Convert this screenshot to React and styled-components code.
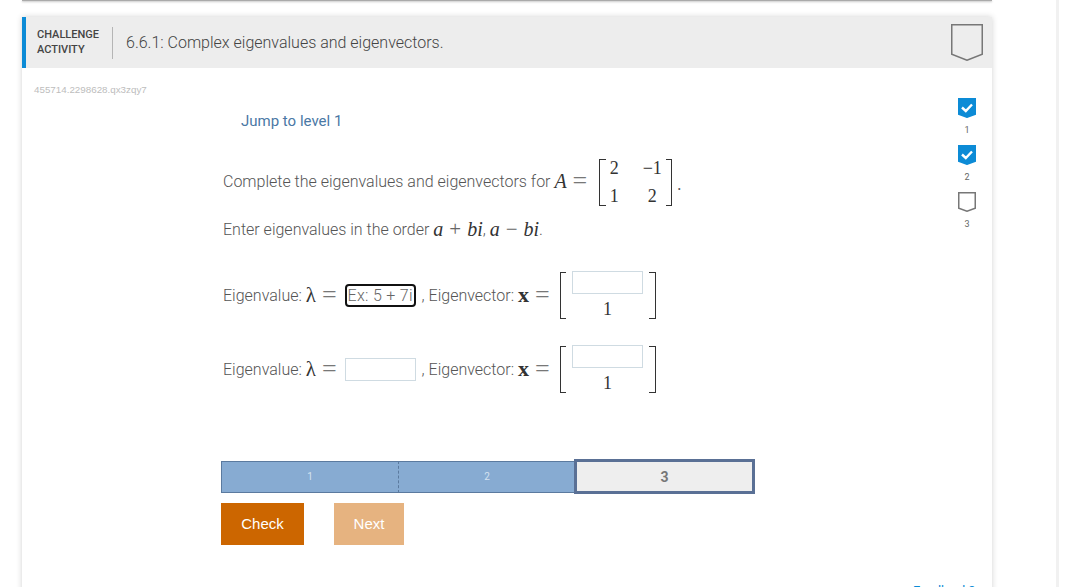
import styled, { createGlobalStyle } from 'styled-components'

const GlobalStyle = createGlobalStyle`
    html, body {
        margin: 0;
        height: 587px;
        overflow: hidden;
        background: #fff;
    }
    body {
        font-family: Roboto, "Liberation Sans", sans-serif;
        color: #555;
    }
`

function Chevron({ size, done }) {
    const w = size === 'large' ? 32 : 18
    const h = size === 'large' ? 37 : 20
    const tip = size === 'large' ? 6 : 3
    const points = `0.75,0.75 ${w - 0.75},0.75 ${w - 0.75},${h - tip - 0.75} ${w / 2},${h - 0.75} 0.75,${h - tip - 0.75}`
    return (
        <svg width={w} height={h} viewBox={`0 0 ${w} ${h}`}>
            <polygon
                points={points}
                fill={done ? '#0c8bd6' : 'none'}
                stroke={done ? '#0c8bd6' : '#777'}
                strokeWidth="1.5"
            />
            {done && <path d="M4 9.5 L7.8 13 L14 6.5" fill="none" stroke="#fff" strokeWidth="2.4" />}
        </svg>
    )
}

function Matrix({ children, columns, width, gap }) {
    return (
        <MatrixWrap>
            <Bracket side="left" />
            <MatrixGrid $columns={columns} $width={width} $gap={gap}>{children}</MatrixGrid>
            <Bracket side="right" />
        </MatrixWrap>
    )
}

function EigenRow({ placeholder, focused }) {
    return (
        <EigenLine>
            Eigenvalue: <Lambda>λ</Lambda><MathOp>=</MathOp>
            <AnswerInput placeholder={placeholder} $focused={focused} readOnly />
            <Comma>, Eigenvector:&nbsp;</Comma><VectorName>x</VectorName><MathOp>=</MathOp>
            <VectorSlot>
                <Matrix columns="1fr" width="83px" gap="4px 0">
                    <VectorInput readOnly />
                    <MathCell>1</MathCell>
                </Matrix>
            </VectorSlot>
        </EigenLine>
    )
}

export default function App() {
    return (
        <Page>
            <GlobalStyle />
            <TopStrip />
            <Card>
                <Header>
                    <Label>CHALLENGE<br />ACTIVITY</Label>
                    <Title>6.6.1: Complex eigenvalues and eigenvectors.</Title>
                    <Chevron size="large" />
                </Header>
                <Body>
                    <Main>
                        <ActivityId>455714.2298628.qx3zqy7</ActivityId>
                        <JumpLink>Jump to level 1</JumpLink>
                        <Question>
                            Complete the eigenvalues and eigenvectors for&nbsp;<MathVar>A</MathVar><MathOp>=</MathOp>
                            <QuestionMatrix>
                                <Matrix columns="auto auto" width="60px" gap="6px 24px">
                                    <MathCell>2</MathCell>
                                    <MathCell>−1</MathCell>
                                    <MathCell>1</MathCell>
                                    <MathCell>2</MathCell>
                                </Matrix>
                            </QuestionMatrix>
                            <MathDot>.</MathDot>
                        </Question>
                        <OrderLine>
                            Enter eigenvalues in the order&nbsp;<MathVar>a</MathVar>
                            <MathSign>+</MathSign><MathVar>bi</MathVar>,&nbsp;<MathVar>a</MathVar>
                            <MathSign>−</MathSign><MathVar>bi</MathVar>.
                        </OrderLine>
                        <EigenRows>
                            <EigenRow placeholder="Ex: 5 + 7i" focused />
                            <EigenRow />
                        </EigenRows>
                        <Levels>
                            <Level>1</Level>
                            <Level $divided>2</Level>
                            <CurrentLevel>3</CurrentLevel>
                        </Levels>
                        <Actions>
                            <ActionButton>Check</ActionButton>
                            <ActionButton $dim>Next</ActionButton>
                        </Actions>
                    </Main>
                    <Progress>
                        <ProgressItem><Chevron done /><span>1</span></ProgressItem>
                        <ProgressItem><Chevron done /><span>2</span></ProgressItem>
                        <ProgressItem><Chevron /><span>3</span></ProgressItem>
                    </Progress>
                </Body>
                <Feedback>Feedback?</Feedback>
            </Card>
        </Page>
    )
}

const Page = styled.div`
    width: 1059px;
    height: 587px;
    box-sizing: border-box;
    padding: 0 64px 0 22px;
    border-right: 3px solid #f1f1f1;
    overflow: hidden;
`

const TopStrip = styled.div`
    width: 970px;
    height: 1px;
    margin-bottom: 16px;
    background: #aaa;
    box-shadow: 0 1px 2px rgba(0, 0, 0, 0.3);
`

const Card = styled.section`
    width: 970px;
    height: 640px;
    box-shadow: 0 0 6px rgba(0, 0, 0, 0.18);
`

const Header = styled.header`
    height: 51px;
    box-sizing: border-box;
    display: flex;
    align-items: center;
    padding: 0 9px 0 11px;
    background: #ededed;
    border-left: 4px solid #0c8bd6;
`

const Label = styled.div`
    width: 76px;
    height: 32px;
    box-sizing: border-box;
    font-size: 11px;
    font-weight: 500;
    line-height: 15px;
    color: #444;
    border-right: 1px solid #b5b5b5;
`

const Title = styled.h1`
    flex: 1;
    margin: 0 0 0 13px;
    font-size: 16px;
    font-weight: 300;
    color: #444;
`

const Body = styled.div`
    display: flex;
    padding: 0 10px 0 12px;
`

const Main = styled.div`
    flex: 1;
`

const ActivityId = styled.div`
    margin-top: 16px;
    font-family: "Liberation Sans", sans-serif;
    font-size: 9.8px;
    line-height: 12px;
    color: #bdbdbd;
`

const JumpLink = styled.a`
    display: block;
    margin: 15px 0 0 207px;
    font-size: 15px;
    line-height: 20px;
    color: #4a78a5;
`

const Question = styled.div`
    display: flex;
    align-items: center;
    height: 52px;
    margin: 24px 0 0 189px;
    font-size: 16px;
    font-weight: 300;
`

const OrderLine = styled.div`
    display: flex;
    align-items: center;
    height: 24px;
    margin: 10px 0 0 189px;
    font-size: 16px;
    font-weight: 300;
`

const MathVar = styled.span`
    font-family: "Liberation Serif", serif;
    font-size: 20px;
    font-style: italic;
    color: #333;
`

const VectorName = styled.span`
    font-family: "Liberation Serif", serif;
    font-size: 22px;
    font-weight: 700;
    line-height: 1;
    color: #333;
`

const Lambda = styled.span`
    font-family: "Liberation Serif", serif;
    font-size: 21px;
    color: #333;
`

const MathOp = styled.span`
    margin: 0 6px;
    font-family: "Liberation Serif", serif;
    font-size: 26px;
    line-height: 1;
    color: #777;
`

const MathSign = styled.span`
    margin: 0 6px;
    font-family: "Liberation Serif", serif;
    font-size: 21px;
    line-height: 1;
    color: #666;
`

const MathDot = styled.span`
    margin: 8px 0 0 5px;
    font-family: "Liberation Serif", serif;
`

const QuestionMatrix = styled.span`
    display: inline-flex;
    margin-left: 6px;
    padding-top: 2px;
`

const MatrixWrap = styled.span`
    display: inline-flex;
    align-items: center;
`

const Bracket = styled.span`
    width: 6.5px;
    height: 47px;
    box-sizing: border-box;
    border: 1.5px solid #333;
    border-${p => (p.side === 'left' ? 'right' : 'left')}: none;
`

const MatrixGrid = styled.span`
    display: grid;
    grid-template-columns: ${p => p.$columns};
    gap: ${p => p.$gap};
    width: ${p => p.$width};
    align-items: center;
    justify-items: center;
    justify-content: center;
`

const MathCell = styled.span`
    font-family: "Liberation Serif", serif;
    font-size: 18px;
    line-height: 22px;
    color: #333;
`

const EigenRows = styled.div`
    display: flex;
    flex-direction: column;
    gap: 22px;
    margin: 28px 0 0 189px;
`

const EigenLine = styled.div`
    display: flex;
    align-items: center;
    height: 52px;
    font-size: 16px;
    font-weight: 300;
    white-space: pre;
`

const AnswerInput = styled.input`
    width: 71px;
    height: 23px;
    box-sizing: border-box;
    margin-left: 2px;
    padding: 0 1px;
    font-family: Roboto, sans-serif;
    font-size: 16px;
    font-weight: 300;
    letter-spacing: 0.3px;
    outline: none;
    border: ${p => (p.$focused ? '2px solid #111' : '1px solid #cfdbe2')};
    border-radius: ${p => (p.$focused ? '4px' : '0')};

    &::placeholder {
        color: #666;
    }
`

const Comma = styled.span`
    margin-left: 6px;
`

const VectorSlot = styled.span`
    display: inline-flex;
    margin-left: 4px;
`

const VectorInput = styled.input`
    width: 71px;
    height: 23px;
    box-sizing: border-box;
    border: 1px solid #cfdbe2;
    outline: none;
`

const Levels = styled.div`
    display: flex;
    align-items: center;
    width: 534px;
    height: 35px;
    margin: 64px 0 0 187px;
`

const Level = styled.div`
    width: 177px;
    height: 32px;
    box-sizing: border-box;
    display: flex;
    align-items: center;
    justify-content: center;
    font-size: 10px;
    color: #d5e2f0;
    background: #87abd2;
    border: 1px solid #5b7a9f;
    border-left: ${p => (p.$divided ? '1px dashed #5b7a9f' : '1px solid #5b7a9f')};
    border-right: none;
`

const CurrentLevel = styled.div`
    flex: none;
    width: 181px;
    height: 35px;
    box-sizing: border-box;
    margin-left: -1px;
    display: flex;
    align-items: center;
    justify-content: center;
    font-size: 14px;
    font-weight: 700;
    color: #777;
    background: #eee;
    border: 3px solid #5a7095;
`

const Actions = styled.div`
    display: flex;
    gap: 30px;
    margin: 9px 0 0 187px;
`

const ActionButton = styled.button`
    width: ${p => (p.$dim ? '70px' : '83px')};
    height: 42px;
    border: none;
    padding: 0 0 2px;
    font-family: "Liberation Sans", sans-serif;
    font-size: 15px;
    color: #fff;
    background: ${p => (p.$dim ? '#e6b380' : '#cc6600')};
`

const Progress = styled.aside`
    display: flex;
    flex-direction: column;
    gap: 10px;
    width: 18px;
    margin: 30px 6px 0 0;
`

const ProgressItem = styled.div`
    display: flex;
    flex-direction: column;
    align-items: center;
    gap: 7px;
    font-size: 9px;
    line-height: 10px;
    color: #666;

    svg {
        display: block;
    }
`

const Feedback = styled.a`
    display: block;
    margin: 38px 17px 0 auto;
    width: max-content;
    font-size: 13px;
    color: #0c8bd6;
`
